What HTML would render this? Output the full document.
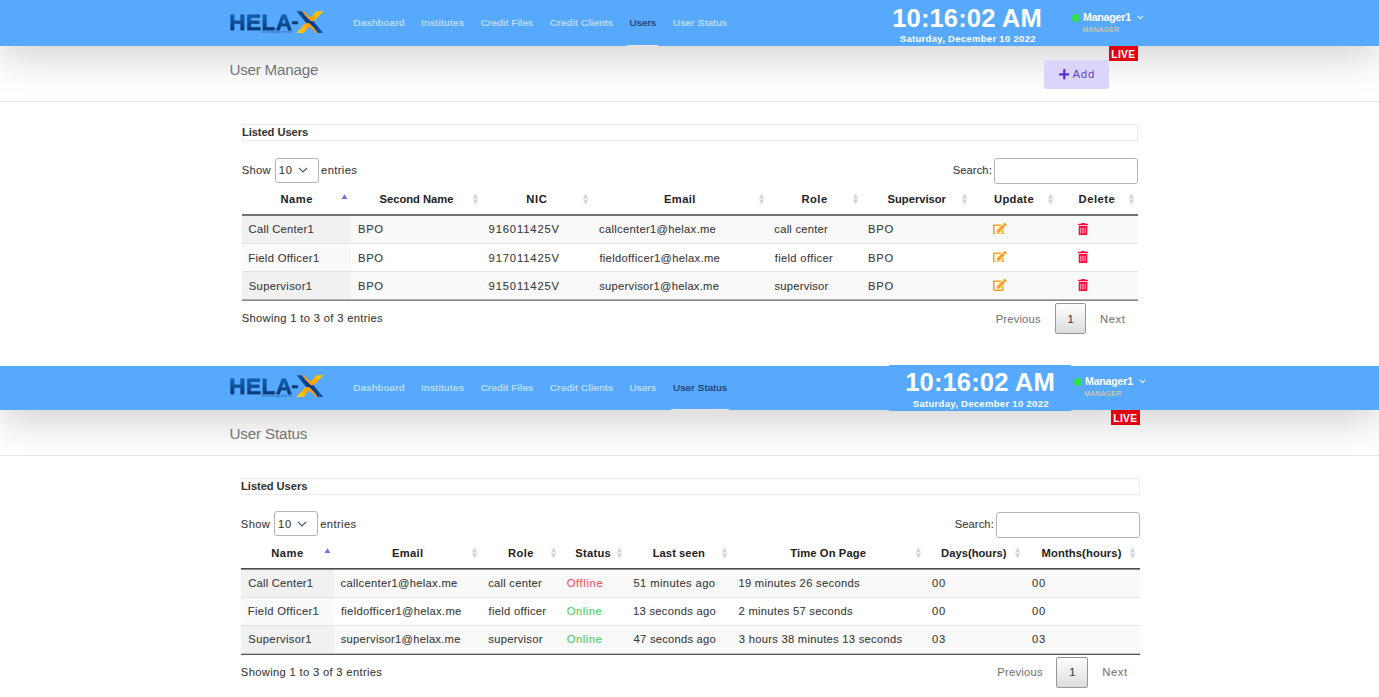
<!DOCTYPE html><html><head><meta charset="utf-8"><title>HELA-X Users</title><style>html,body{margin:0;padding:0;background:#fff}body{width:1379px;height:697px;position:relative;overflow:hidden;font-family:"Liberation Sans", sans-serif}body>div,body>span,body>svg{position:absolute;display:block}span{white-space:nowrap;line-height:1}</style></head><body>
<div style="left:0;top:46px;width:1379px;height:55px;overflow:hidden;background:#fff;border-bottom:1px solid #e6e6e6;box-sizing:content-box"><div style="position:absolute;left:0;right:0;top:-46px;height:46px;box-shadow:0 12px 38px rgba(0,0,0,.18)"></div></div>
<div style="left:0px;top:0px;width:1379px;height:46px;background:#56a9fd"></div>
<svg style="left:296.0px;top:11.0px" width="28" height="22.4" viewBox="0 0 28 22.4"><defs><linearGradient id="lg_o1" gradientUnits="userSpaceOnUse" x1="14" y1="10" x2="27" y2="0"><stop offset="0" stop-color="#ff9800"/><stop offset="1" stop-color="#ffd200"/></linearGradient><linearGradient id="lg_b1" gradientUnits="userSpaceOnUse" x1="0" y1="0" x2="27" y2="22"><stop offset="0" stop-color="#0c56a8"/><stop offset=".5" stop-color="#083878"/><stop offset="1" stop-color="#0c56a8"/></linearGradient></defs><path d="M0.53,0.28 L6.06,0.28 Q10,6 14.2,9.6 Q15.6,10.6 17.2,9.9 L27.2,21.9 L21.62,21.9 Q17.7,16.2 13.5,12.6 Q12.1,11.6 10.5,12.3 Z" fill="url(#lg_b1)"/><path d="M6.06,0.28 L7.8,0.28 Q11,4.5 14.6,6.56 L20.1,0.28 L27.4,0.28 L19.1,9.08 Q16.6,11.2 14.2,9.6 Q10,6 6.06,0.28 Z" fill="url(#lg_o1)"/><path d="M6.06,0.28 L7.8,0.28 Q11,4.5 14.6,6.56 L20.1,0.28 L27.4,0.28 L19.1,9.08 Q16.6,11.2 14.2,9.6 Q10,6 6.06,0.28 Z" fill="url(#lg_o1)" transform="rotate(180 13.84 11.09)"/></svg>
<div style="left:627.1px;top:44.5px;width:31.100000000000023px;height:1.5px;background:#e4e8ee"></div>
<div style="left:1072px;top:13.9px;width:7.8px;height:7.8px;background:#33df4c;border-radius:50%"></div>
<svg style="left:1136.5px;top:15px" width="7" height="5" viewBox="0 0 7 5"><polyline points="0.8,0.900 3.5,3.600 6.2,0.900" fill="none" stroke="#e8f2ff" stroke-width="1.1"/></svg>
<div style="left:1108.8px;top:46.4px;width:29.2px;height:14.5px;background:#e3000f"></div>
<div style="left:1044px;top:60.3px;width:64.6px;height:28.6px;background:#dcd5fb;border-radius:3px"></div>
<svg style="left:1058.8px;top:69.2px" width="10.6" height="10.6" viewBox="0 32 448 448"><path fill="#5b2dc9" d="M416 208H272V64c0-17.670-14.330-32-32-32h-32c-17.670 0-32 14.330-32 32v144H32c-17.670 0-32 14.330-32 32v32c0 17.670 14.330 32 32 32h144v144c0 17.670 14.330 32 32 32h32c17.670 0 32-14.330 32-32V304h144c17.670 0 32-14.330 32-32v-32c0-17.670-14.330-32-32-32z"/></svg>
<div style="left:242px;top:124.3px;width:894px;height:14.5px;border:1px solid #ececec"></div>
<div style="left:275px;top:158px;width:43.6px;height:25px;border:1px solid #b4b4b4;border-radius:3px;box-sizing:border-box;background:#fff"></div>
<svg style="left:298px;top:167.3px" width="10" height="6" viewBox="0 0 10 6"><polyline points="1,1 5,5 9,1" fill="none" stroke="#555" stroke-width="1.1"/></svg>
<div style="left:993.6px;top:158.3px;width:144.4px;height:25.3px;border:1px solid #b4b4b4;border-radius:3px;box-sizing:border-box;background:#fff"></div>
<div style="left:242px;top:214px;width:896px;height:1px;background:#6e6e6e"></div>
<div style="left:242px;top:215px;width:896px;height:28px;background:#f9f9f9;border-top:1px solid #e2e2e2;box-sizing:border-box"></div>
<div style="left:242px;top:215px;width:109.39999999999998px;height:28px;background:#f1f1f1"></div>
<div style="left:242px;top:243px;width:896px;height:28px;background:#ffffff;border-top:1px solid #e2e2e2;box-sizing:border-box"></div>
<div style="left:242px;top:244px;width:109.39999999999998px;height:27px;background:#fafafa"></div>
<div style="left:242px;top:271px;width:896px;height:28px;background:#f9f9f9;border-top:1px solid #e2e2e2;box-sizing:border-box"></div>
<div style="left:242px;top:272px;width:109.39999999999998px;height:27px;background:#f1f1f1"></div>
<div style="left:242px;top:215px;width:896px;height:1px;background:#747474"></div>
<div style="left:242px;top:299px;width:896px;height:1px;background:#b0b0b0"></div>
<div style="left:242px;top:300px;width:896px;height:1px;background:#858585"></div>
<svg style="left:341.4px;top:194.0px" width="7" height="6" viewBox="0 0 7 6"><polygon points="3.5,0.3 6.4,5 0.6,5" fill="#6d72dc"/></svg>
<svg style="left:471.7px;top:193.3px" width="7" height="12" viewBox="0 0 7 12"><polygon points="3.5,0.2 6.2,5.4 0.8,5.4" fill="#d6d6d6"/><polygon points="3.5,11.8 6.2,6.600 0.8,6.600" fill="#d6d6d6"/></svg>
<svg style="left:582.0999999999999px;top:193.3px" width="7" height="12" viewBox="0 0 7 12"><polygon points="3.5,0.2 6.2,5.4 0.8,5.4" fill="#d6d6d6"/><polygon points="3.5,11.8 6.2,6.600 0.8,6.600" fill="#d6d6d6"/></svg>
<svg style="left:757.5px;top:193.3px" width="7" height="12" viewBox="0 0 7 12"><polygon points="3.5,0.2 6.2,5.4 0.8,5.4" fill="#d6d6d6"/><polygon points="3.5,11.8 6.2,6.600 0.8,6.600" fill="#d6d6d6"/></svg>
<svg style="left:852.0999999999999px;top:193.3px" width="7" height="12" viewBox="0 0 7 12"><polygon points="3.5,0.2 6.2,5.4 0.8,5.4" fill="#d6d6d6"/><polygon points="3.5,11.8 6.2,6.600 0.8,6.600" fill="#d6d6d6"/></svg>
<svg style="left:961.4px;top:193.3px" width="7" height="12" viewBox="0 0 7 12"><polygon points="3.5,0.2 6.2,5.4 0.8,5.4" fill="#d6d6d6"/><polygon points="3.5,11.8 6.2,6.600 0.8,6.600" fill="#d6d6d6"/></svg>
<svg style="left:1047.0px;top:193.3px" width="7" height="12" viewBox="0 0 7 12"><polygon points="3.5,0.2 6.2,5.4 0.8,5.4" fill="#d6d6d6"/><polygon points="3.5,11.8 6.2,6.600 0.8,6.600" fill="#d6d6d6"/></svg>
<svg style="left:1127.7px;top:193.3px" width="7" height="12" viewBox="0 0 7 12"><polygon points="3.5,0.2 6.2,5.4 0.8,5.4" fill="#d6d6d6"/><polygon points="3.5,11.8 6.2,6.600 0.8,6.600" fill="#d6d6d6"/></svg>
<svg style="left:993px;top:222.5px" width="13.7" height="11.9" viewBox="0 0 576 512" preserveAspectRatio="none"><path fill="#ff9f1a" d="M402.6 83.200l90.200 90.200c3.800 3.800 3.800 10 0 13.800L274.400 405.600l-92.800 10.300c-12.400 1.400-22.900-9.100-21.500-21.500l10.300-92.800L388.800 83.200c3.800-3.800 10-3.800 13.800 0zm162-22.900l-48.800-48.800c-15.200-15.200-39.900-15.200-55.200 0l-35.400 35.400c-3.800 3.800-3.800 10 0 13.800l90.200 90.200c3.800 3.800 10 3.800 13.800 0l35.400-35.400c15.200-15.300 15.200-40 0-55.200zM384 346.200V448H64V128h229.800c3.200 0 6.200-1.300 8.500-3.500l40-40c7.600-7.600 2.200-20.500-8.500-20.500H48C21.500 64 0 85.500 0 112v352c0 26.500 21.500 48 48 48h352c26.500 0 48-21.500 48-48V306.200c0-10.700-12.900-16-20.500-8.500l-40 40c-2.200 2.300-3.500 5.300-3.500 8.500z"/></svg>
<svg style="left:1078.3px;top:222.5px" width="10" height="12.1" viewBox="0 0 448 512" preserveAspectRatio="none"><path fill="#ff0a3a" d="M32 464a48 48 0 0 0 48 48h288a48 48 0 0 0 48-48V128H32zm272-256a16 16 0 0 1 32 0v224a16 16 0 0 1-32 0zm-96 0a16 16 0 0 1 32 0v224a16 16 0 0 1-32 0zm-96 0a16 16 0 0 1 32 0v224a16 16 0 0 1-32 0zM432 32H312l-9.400-18.700A24 24 0 0 0 281.100 0H166.800a23.720 23.720 0 0 0-21.400 13.300L136 32H16A16 16 0 0 0 0 48v32a16 16 0 0 0 16 16h416a16 16 0 0 0 16-16V48a16 16 0 0 0-16-16z"/></svg>
<svg style="left:993px;top:250.6px" width="13.7" height="11.9" viewBox="0 0 576 512" preserveAspectRatio="none"><path fill="#ff9f1a" d="M402.6 83.200l90.200 90.200c3.800 3.800 3.800 10 0 13.800L274.400 405.600l-92.800 10.300c-12.400 1.400-22.900-9.100-21.500-21.500l10.300-92.800L388.800 83.200c3.800-3.800 10-3.800 13.800 0zm162-22.900l-48.800-48.800c-15.200-15.200-39.900-15.200-55.200 0l-35.400 35.400c-3.800 3.800-3.800 10 0 13.800l90.200 90.200c3.800 3.800 10 3.800 13.800 0l35.400-35.400c15.200-15.300 15.200-40 0-55.200zM384 346.200V448H64V128h229.800c3.200 0 6.200-1.300 8.500-3.500l40-40c7.600-7.600 2.200-20.500-8.500-20.500H48C21.500 64 0 85.500 0 112v352c0 26.500 21.500 48 48 48h352c26.500 0 48-21.500 48-48V306.200c0-10.700-12.900-16-20.500-8.500l-40 40c-2.200 2.300-3.500 5.300-3.500 8.500z"/></svg>
<svg style="left:1078.3px;top:250.6px" width="10" height="12.1" viewBox="0 0 448 512" preserveAspectRatio="none"><path fill="#ff0a3a" d="M32 464a48 48 0 0 0 48 48h288a48 48 0 0 0 48-48V128H32zm272-256a16 16 0 0 1 32 0v224a16 16 0 0 1-32 0zm-96 0a16 16 0 0 1 32 0v224a16 16 0 0 1-32 0zm-96 0a16 16 0 0 1 32 0v224a16 16 0 0 1-32 0zM432 32H312l-9.400-18.700A24 24 0 0 0 281.100 0H166.800a23.720 23.720 0 0 0-21.400 13.300L136 32H16A16 16 0 0 0 0 48v32a16 16 0 0 0 16 16h416a16 16 0 0 0 16-16V48a16 16 0 0 0-16-16z"/></svg>
<svg style="left:993px;top:278.7px" width="13.7" height="11.9" viewBox="0 0 576 512" preserveAspectRatio="none"><path fill="#ff9f1a" d="M402.6 83.200l90.200 90.200c3.800 3.800 3.800 10 0 13.800L274.400 405.600l-92.800 10.300c-12.400 1.400-22.900-9.100-21.500-21.500l10.300-92.800L388.800 83.200c3.800-3.800 10-3.800 13.800 0zm162-22.900l-48.800-48.800c-15.200-15.200-39.900-15.200-55.200 0l-35.400 35.400c-3.800 3.800-3.800 10 0 13.800l90.200 90.200c3.800 3.800 10 3.800 13.800 0l35.400-35.400c15.200-15.300 15.200-40 0-55.200zM384 346.200V448H64V128h229.800c3.200 0 6.200-1.300 8.500-3.500l40-40c7.600-7.600 2.200-20.500-8.500-20.500H48C21.500 64 0 85.500 0 112v352c0 26.500 21.500 48 48 48h352c26.500 0 48-21.500 48-48V306.200c0-10.700-12.900-16-20.500-8.500l-40 40c-2.200 2.300-3.500 5.300-3.500 8.500z"/></svg>
<svg style="left:1078.3px;top:278.7px" width="10" height="12.1" viewBox="0 0 448 512" preserveAspectRatio="none"><path fill="#ff0a3a" d="M32 464a48 48 0 0 0 48 48h288a48 48 0 0 0 48-48V128H32zm272-256a16 16 0 0 1 32 0v224a16 16 0 0 1-32 0zm-96 0a16 16 0 0 1 32 0v224a16 16 0 0 1-32 0zm-96 0a16 16 0 0 1 32 0v224a16 16 0 0 1-32 0zM432 32H312l-9.400-18.700A24 24 0 0 0 281.100 0H166.800a23.720 23.720 0 0 0-21.400 13.300L136 32H16A16 16 0 0 0 0 48v32a16 16 0 0 0 16 16h416a16 16 0 0 0 16-16V48a16 16 0 0 0-16-16z"/></svg>
<div style="left:1055px;top:303px;width:31px;height:31px;border:1px solid #979797;border-radius:2px;box-sizing:border-box;background:linear-gradient(to bottom,#fff 0%,#dcdcdc 100%)"></div>
<div style="left:0;top:410px;width:1379px;height:45px;overflow:hidden;background:#fff;border-bottom:1px solid #e6e6e6;box-sizing:content-box"><div style="position:absolute;left:0;right:0;top:-46px;height:46px;box-shadow:0 12px 38px rgba(0,0,0,.18)"></div></div>
<div style="left:0px;top:366px;width:1379px;height:44px;background:#56a9fd"></div>
<svg style="left:296.0px;top:375.0px" width="28" height="22.4" viewBox="0 0 28 22.4"><defs><linearGradient id="lg_o2" gradientUnits="userSpaceOnUse" x1="14" y1="10" x2="27" y2="0"><stop offset="0" stop-color="#ff9800"/><stop offset="1" stop-color="#ffd200"/></linearGradient><linearGradient id="lg_b2" gradientUnits="userSpaceOnUse" x1="0" y1="0" x2="27" y2="22"><stop offset="0" stop-color="#0c56a8"/><stop offset=".5" stop-color="#083878"/><stop offset="1" stop-color="#0c56a8"/></linearGradient></defs><path d="M0.53,0.28 L6.06,0.28 Q10,6 14.2,9.6 Q15.6,10.6 17.2,9.9 L27.2,21.9 L21.62,21.9 Q17.7,16.2 13.5,12.6 Q12.1,11.6 10.5,12.3 Z" fill="url(#lg_b2)"/><path d="M6.06,0.28 L7.8,0.28 Q11,4.5 14.6,6.56 L20.1,0.28 L27.4,0.28 L19.1,9.08 Q16.6,11.2 14.2,9.6 Q10,6 6.06,0.28 Z" fill="url(#lg_o2)"/><path d="M6.06,0.28 L7.8,0.28 Q11,4.5 14.6,6.56 L20.1,0.28 L27.4,0.28 L19.1,9.08 Q16.6,11.2 14.2,9.6 Q10,6 6.06,0.28 Z" fill="url(#lg_o2)" transform="rotate(180 13.84 11.09)"/></svg>
<div style="left:670.7px;top:408.5px;width:58.5px;height:1.5px;background:#e4e8ee"></div>
<div style="left:1074px;top:377.9px;width:7.8px;height:7.8px;background:#33df4c;border-radius:50%"></div>
<svg style="left:1138.5px;top:379px" width="7" height="5" viewBox="0 0 7 5"><polyline points="0.8,0.900 3.5,3.600 6.2,0.900" fill="none" stroke="#e8f2ff" stroke-width="1.1"/></svg>
<div style="left:1110.8px;top:410.4px;width:29.2px;height:14.5px;background:#e3000f"></div>
<div style="left:889.4px;top:365px;width:182px;height:45.6px;background:#56a9fd"></div>
<div style="left:241.2px;top:478.3px;width:896.8px;height:14.5px;border:1px solid #ececec"></div>
<div style="left:274px;top:511px;width:43.6px;height:25px;border:1px solid #b4b4b4;border-radius:3px;box-sizing:border-box;background:#fff"></div>
<svg style="left:297.2px;top:521.3px" width="10" height="6" viewBox="0 0 10 6"><polyline points="1,1 5,5 9,1" fill="none" stroke="#555" stroke-width="1.1"/></svg>
<div style="left:995.6px;top:512.3px;width:144.4px;height:25.3px;border:1px solid #b4b4b4;border-radius:3px;box-sizing:border-box;background:#fff"></div>
<div style="left:241.2px;top:568px;width:898.8px;height:1px;background:#4e4e4e"></div>
<div style="left:241.2px;top:569px;width:898.8px;height:28px;background:#f9f9f9;border-top:1px solid #e2e2e2;box-sizing:border-box"></div>
<div style="left:241.2px;top:569px;width:92.80000000000001px;height:28px;background:#f1f1f1"></div>
<div style="left:241.2px;top:597px;width:898.8px;height:28px;background:#ffffff;border-top:1px solid #e2e2e2;box-sizing:border-box"></div>
<div style="left:241.2px;top:598px;width:92.80000000000001px;height:27px;background:#fafafa"></div>
<div style="left:241.2px;top:625px;width:898.8px;height:28px;background:#f9f9f9;border-top:1px solid #e2e2e2;box-sizing:border-box"></div>
<div style="left:241.2px;top:626px;width:92.80000000000001px;height:27px;background:#f1f1f1"></div>
<div style="left:241.2px;top:569px;width:898.8px;height:1px;background:#8a8a8a"></div>
<div style="left:241.2px;top:653px;width:898.8px;height:1px;background:#c4c4c4"></div>
<div style="left:241.2px;top:654px;width:898.8px;height:1px;background:#555"></div>
<svg style="left:324.0px;top:548.0px" width="7" height="6" viewBox="0 0 7 6"><polygon points="3.5,0.3 6.4,5 0.6,5" fill="#6d72dc"/></svg>
<svg style="left:471.2px;top:547.3px" width="7" height="12" viewBox="0 0 7 12"><polygon points="3.5,0.2 6.2,5.4 0.8,5.4" fill="#d6d6d6"/><polygon points="3.5,11.8 6.2,6.600 0.8,6.600" fill="#d6d6d6"/></svg>
<svg style="left:549.9px;top:547.3px" width="7" height="12" viewBox="0 0 7 12"><polygon points="3.5,0.2 6.2,5.4 0.8,5.4" fill="#d6d6d6"/><polygon points="3.5,11.8 6.2,6.600 0.8,6.600" fill="#d6d6d6"/></svg>
<svg style="left:616.1999999999999px;top:547.3px" width="7" height="12" viewBox="0 0 7 12"><polygon points="3.5,0.2 6.2,5.4 0.8,5.4" fill="#d6d6d6"/><polygon points="3.5,11.8 6.2,6.600 0.8,6.600" fill="#d6d6d6"/></svg>
<svg style="left:721.0999999999999px;top:547.3px" width="7" height="12" viewBox="0 0 7 12"><polygon points="3.5,0.2 6.2,5.4 0.8,5.4" fill="#d6d6d6"/><polygon points="3.5,11.8 6.2,6.600 0.8,6.600" fill="#d6d6d6"/></svg>
<svg style="left:914.5999999999999px;top:547.3px" width="7" height="12" viewBox="0 0 7 12"><polygon points="3.5,0.2 6.2,5.4 0.8,5.4" fill="#d6d6d6"/><polygon points="3.5,11.8 6.2,6.600 0.8,6.600" fill="#d6d6d6"/></svg>
<svg style="left:1014.1999999999999px;top:547.3px" width="7" height="12" viewBox="0 0 7 12"><polygon points="3.5,0.2 6.2,5.4 0.8,5.4" fill="#d6d6d6"/><polygon points="3.5,11.8 6.2,6.600 0.8,6.600" fill="#d6d6d6"/></svg>
<svg style="left:1129.3999999999999px;top:547.3px" width="7" height="12" viewBox="0 0 7 12"><polygon points="3.5,0.2 6.2,5.4 0.8,5.4" fill="#d6d6d6"/><polygon points="3.5,11.8 6.2,6.600 0.8,6.600" fill="#d6d6d6"/></svg>
<div style="left:1056.4px;top:657px;width:31.5px;height:31px;border:1px solid #979797;border-radius:2px;box-sizing:border-box;background:linear-gradient(to bottom,#fff 0%,#dcdcdc 100%)"></div>
<span style="left:229.45px;top:62.00px;font-size:15.2px;font-weight:400;color:#747474;letter-spacing:-0.228px;">User Manage</span>
<span style="left:229.19px;top:12.00px;font-size:22.6px;font-weight:700;color:#0b3f80;letter-spacing:0.474px;background:linear-gradient(to bottom,#0f5fb0 25%,#0a3470 80%);-webkit-background-clip:text;background-clip:text;color:transparent;-webkit-text-stroke:0.35px #0c4a94;">HELA</span>
<span style="left:291.21px;top:10.00px;font-size:22.0px;font-weight:700;color:#0a3c7c;letter-spacing:0.456px;-webkit-text-stroke:0.3px #0a3c7c;">-</span>
<span style="left:260.95px;top:32.00px;font-size:2.6px;font-weight:400;color:#2a5a9c;letter-spacing:-0.101px;">Your one manager of the face</span>
<span style="left:353.23px;top:18.00px;font-size:9.8px;font-weight:400;color:#c6e1fe;letter-spacing:0.422px;-webkit-text-stroke-width:0.2px;">Dashboard</span>
<span style="left:420.93px;top:18.00px;font-size:9.8px;font-weight:400;color:#c6e1fe;letter-spacing:0.417px;-webkit-text-stroke-width:0.2px;">Institutes</span>
<span style="left:480.74px;top:18.00px;font-size:9.8px;font-weight:400;color:#c6e1fe;letter-spacing:0.246px;-webkit-text-stroke-width:0.2px;">Credit Files</span>
<span style="left:549.94px;top:18.00px;font-size:9.8px;font-weight:400;color:#c6e1fe;letter-spacing:0.319px;-webkit-text-stroke-width:0.2px;">Credit Clients</span>
<span style="left:629.49px;top:18.00px;font-size:9.8px;font-weight:400;color:#1f3968;letter-spacing:0.232px;-webkit-text-stroke-width:0.2px;">Users</span>
<span style="left:673.09px;top:18.00px;font-size:9.8px;font-weight:400;color:#c6e1fe;letter-spacing:0.272px;-webkit-text-stroke-width:0.2px;">User Status</span>
<span style="left:892.20px;top:6.00px;font-size:25.6px;font-weight:700;color:#fff;letter-spacing:0.113px;">10:16:02 AM</span>
<span style="left:899.75px;top:34.00px;font-size:9.5px;font-weight:700;color:#fff;letter-spacing:0.305px;">Saturday, December 10 2022</span>
<span style="left:1083.04px;top:12.00px;font-size:10.6px;font-weight:700;color:#fff;letter-spacing:-0.208px;">Manager1</span>
<span style="left:1082.47px;top:27.00px;font-size:6.8px;font-weight:400;color:#f0d27c;letter-spacing:0.398px;">MANAGER</span>
<span style="left:1111.36px;top:50.00px;font-size:10.2px;font-weight:700;color:#fff;letter-spacing:0.345px;">LIVE</span>
<span style="left:1072.50px;top:69.00px;font-size:11.4px;font-weight:400;color:#6640d0;letter-spacing:0.728px;">Add</span>
<span style="left:241.90px;top:127.00px;font-size:11.2px;font-weight:700;color:#303030;letter-spacing:-0.079px;">Listed Users</span>
<span style="left:241.65px;top:165.00px;font-size:11.2px;font-weight:400;color:#3a3a3a;letter-spacing:0.332px;-webkit-text-stroke-width:0.1px;">Show</span>
<span style="left:278.76px;top:165.00px;font-size:11.2px;font-weight:400;color:#3a3a3a;letter-spacing:0.900px;-webkit-text-stroke-width:0.1px;">10</span>
<span style="left:321.05px;top:165.00px;font-size:11.2px;font-weight:400;color:#3a3a3a;letter-spacing:0.381px;-webkit-text-stroke-width:0.1px;">entries</span>
<span style="left:952.65px;top:165.00px;font-size:11.2px;font-weight:400;color:#3a3a3a;letter-spacing:0.094px;-webkit-text-stroke-width:0.1px;">Search:</span>
<span style="left:280.40px;top:194.00px;font-size:11.2px;font-weight:700;color:#222;letter-spacing:0.525px;">Name</span>
<span style="left:379.52px;top:194.00px;font-size:11.2px;font-weight:700;color:#222;letter-spacing:-0.011px;">Second Name</span>
<span style="left:526.30px;top:194.00px;font-size:11.2px;font-weight:700;color:#222;letter-spacing:0.613px;">NIC</span>
<span style="left:664.00px;top:194.00px;font-size:11.2px;font-weight:700;color:#222;letter-spacing:0.370px;">Email</span>
<span style="left:801.50px;top:194.00px;font-size:11.2px;font-weight:700;color:#222;letter-spacing:0.470px;">Role</span>
<span style="left:887.62px;top:194.00px;font-size:11.2px;font-weight:700;color:#222;letter-spacing:-0.020px;">Supervisor</span>
<span style="left:993.98px;top:194.00px;font-size:11.2px;font-weight:700;color:#222;letter-spacing:0.349px;">Update</span>
<span style="left:1078.50px;top:194.00px;font-size:11.2px;font-weight:700;color:#222;letter-spacing:0.552px;">Delete</span>
<span style="left:248.57px;top:224.00px;font-size:11.2px;font-weight:400;color:#3a3a3a;letter-spacing:0.266px;-webkit-text-stroke-width:0.1px;">Call Center1</span>
<span style="left:358.12px;top:224.00px;font-size:11.2px;font-weight:400;color:#3a3a3a;letter-spacing:0.605px;-webkit-text-stroke-width:0.1px;">BPO</span>
<span style="left:488.58px;top:224.00px;font-size:11.2px;font-weight:400;color:#3a3a3a;letter-spacing:0.875px;-webkit-text-stroke-width:0.1px;">916011425V</span>
<span style="left:599.05px;top:224.00px;font-size:11.2px;font-weight:400;color:#3a3a3a;letter-spacing:0.307px;-webkit-text-stroke-width:0.1px;">callcenter1@helax.me</span>
<span style="left:774.35px;top:224.00px;font-size:11.2px;font-weight:400;color:#3a3a3a;letter-spacing:0.236px;-webkit-text-stroke-width:0.1px;">call center</span>
<span style="left:868.02px;top:224.00px;font-size:11.2px;font-weight:400;color:#3a3a3a;letter-spacing:0.755px;-webkit-text-stroke-width:0.1px;">BPO</span>
<span style="left:248.22px;top:253.00px;font-size:11.2px;font-weight:400;color:#3a3a3a;letter-spacing:0.356px;-webkit-text-stroke-width:0.1px;">Field Officer1</span>
<span style="left:358.12px;top:253.00px;font-size:11.2px;font-weight:400;color:#3a3a3a;letter-spacing:0.605px;-webkit-text-stroke-width:0.1px;">BPO</span>
<span style="left:488.58px;top:253.00px;font-size:11.2px;font-weight:400;color:#3a3a3a;letter-spacing:0.875px;-webkit-text-stroke-width:0.1px;">917011425V</span>
<span style="left:599.40px;top:253.00px;font-size:11.2px;font-weight:400;color:#3a3a3a;letter-spacing:0.317px;-webkit-text-stroke-width:0.1px;">fieldofficer1@helax.me</span>
<span style="left:774.70px;top:253.00px;font-size:11.2px;font-weight:400;color:#3a3a3a;letter-spacing:0.342px;-webkit-text-stroke-width:0.1px;">field officer</span>
<span style="left:868.02px;top:253.00px;font-size:11.2px;font-weight:400;color:#3a3a3a;letter-spacing:0.755px;-webkit-text-stroke-width:0.1px;">BPO</span>
<span style="left:248.75px;top:281.00px;font-size:11.2px;font-weight:400;color:#3a3a3a;letter-spacing:0.354px;-webkit-text-stroke-width:0.1px;">Supervisor1</span>
<span style="left:358.12px;top:281.00px;font-size:11.2px;font-weight:400;color:#3a3a3a;letter-spacing:0.605px;-webkit-text-stroke-width:0.1px;">BPO</span>
<span style="left:488.58px;top:281.00px;font-size:11.2px;font-weight:400;color:#3a3a3a;letter-spacing:0.875px;-webkit-text-stroke-width:0.1px;">915011425V</span>
<span style="left:599.23px;top:281.00px;font-size:11.2px;font-weight:400;color:#3a3a3a;letter-spacing:0.270px;-webkit-text-stroke-width:0.1px;">supervisor1@helax.me</span>
<span style="left:774.53px;top:281.00px;font-size:11.2px;font-weight:400;color:#3a3a3a;letter-spacing:0.241px;-webkit-text-stroke-width:0.1px;">supervisor</span>
<span style="left:868.02px;top:281.00px;font-size:11.2px;font-weight:400;color:#3a3a3a;letter-spacing:0.755px;-webkit-text-stroke-width:0.1px;">BPO</span>
<span style="left:241.65px;top:313.00px;font-size:11.2px;font-weight:400;color:#3a3a3a;letter-spacing:0.330px;-webkit-text-stroke-width:0.1px;">Showing 1 to 3 of 3 entries</span>
<span style="left:995.73px;top:314.00px;font-size:11.2px;font-weight:400;color:#777;letter-spacing:0.179px;-webkit-text-stroke-width:0.1px;">Previous</span>
<span style="left:1067.50px;top:314.00px;font-size:11.2px;font-weight:400;color:#3a3a3a;-webkit-text-stroke-width:0.1px;">1</span>
<span style="left:1100.12px;top:314.00px;font-size:11.2px;font-weight:400;color:#777;letter-spacing:0.603px;-webkit-text-stroke-width:0.1px;">Next</span>
<span style="left:229.45px;top:426.00px;font-size:15.2px;font-weight:400;color:#747474;letter-spacing:-0.138px;">User Status</span>
<span style="left:229.19px;top:376.00px;font-size:22.6px;font-weight:700;color:#0b3f80;letter-spacing:0.474px;background:linear-gradient(to bottom,#0f5fb0 25%,#0a3470 80%);-webkit-background-clip:text;background-clip:text;color:transparent;-webkit-text-stroke:0.35px #0c4a94;">HELA</span>
<span style="left:291.21px;top:374.00px;font-size:22.0px;font-weight:700;color:#0a3c7c;letter-spacing:0.456px;-webkit-text-stroke:0.3px #0a3c7c;">-</span>
<span style="left:260.95px;top:396.00px;font-size:2.6px;font-weight:400;color:#2a5a9c;letter-spacing:-0.101px;">Your one manager of the face</span>
<span style="left:353.23px;top:383.00px;font-size:9.8px;font-weight:400;color:#c6e1fe;letter-spacing:0.422px;-webkit-text-stroke-width:0.2px;">Dashboard</span>
<span style="left:420.93px;top:383.00px;font-size:9.8px;font-weight:400;color:#c6e1fe;letter-spacing:0.417px;-webkit-text-stroke-width:0.2px;">Institutes</span>
<span style="left:480.74px;top:383.00px;font-size:9.8px;font-weight:400;color:#c6e1fe;letter-spacing:0.246px;-webkit-text-stroke-width:0.2px;">Credit Files</span>
<span style="left:549.94px;top:383.00px;font-size:9.8px;font-weight:400;color:#c6e1fe;letter-spacing:0.319px;-webkit-text-stroke-width:0.2px;">Credit Clients</span>
<span style="left:629.49px;top:383.00px;font-size:9.8px;font-weight:400;color:#c6e1fe;letter-spacing:0.232px;-webkit-text-stroke-width:0.2px;">Users</span>
<span style="left:673.09px;top:383.00px;font-size:9.8px;font-weight:400;color:#1f3968;letter-spacing:0.272px;-webkit-text-stroke-width:0.2px;">User Status</span>
<span style="left:905.20px;top:370.00px;font-size:25.6px;font-weight:700;color:#fff;letter-spacing:0.113px;">10:16:02 AM</span>
<span style="left:912.75px;top:399.00px;font-size:9.5px;font-weight:700;color:#fff;letter-spacing:0.305px;">Saturday, December 10 2022</span>
<span style="left:1085.04px;top:376.00px;font-size:10.6px;font-weight:700;color:#fff;letter-spacing:-0.208px;">Manager1</span>
<span style="left:1084.47px;top:391.00px;font-size:6.8px;font-weight:400;color:#f0d27c;letter-spacing:0.398px;">MANAGER</span>
<span style="left:1113.36px;top:414.00px;font-size:10.2px;font-weight:700;color:#fff;letter-spacing:0.345px;">LIVE</span>
<span style="left:241.10px;top:481.00px;font-size:11.2px;font-weight:700;color:#303030;letter-spacing:-0.079px;">Listed Users</span>
<span style="left:240.85px;top:519.00px;font-size:11.2px;font-weight:400;color:#3a3a3a;letter-spacing:0.332px;-webkit-text-stroke-width:0.1px;">Show</span>
<span style="left:277.96px;top:519.00px;font-size:11.2px;font-weight:400;color:#3a3a3a;letter-spacing:0.900px;-webkit-text-stroke-width:0.1px;">10</span>
<span style="left:320.25px;top:519.00px;font-size:11.2px;font-weight:400;color:#3a3a3a;letter-spacing:0.381px;-webkit-text-stroke-width:0.1px;">entries</span>
<span style="left:954.65px;top:519.00px;font-size:11.2px;font-weight:400;color:#3a3a3a;letter-spacing:0.094px;-webkit-text-stroke-width:0.1px;">Search:</span>
<span style="left:271.30px;top:548.00px;font-size:11.2px;font-weight:700;color:#222;letter-spacing:0.458px;">Name</span>
<span style="left:392.00px;top:548.00px;font-size:11.2px;font-weight:700;color:#222;letter-spacing:0.320px;">Email</span>
<span style="left:508.00px;top:548.00px;font-size:11.2px;font-weight:700;color:#222;letter-spacing:0.370px;">Role</span>
<span style="left:575.33px;top:548.00px;font-size:11.2px;font-weight:700;color:#222;letter-spacing:0.240px;">Status</span>
<span style="left:652.70px;top:548.00px;font-size:11.2px;font-weight:700;color:#222;letter-spacing:0.059px;">Last seen</span>
<span style="left:790.20px;top:548.00px;font-size:11.2px;font-weight:700;color:#222;letter-spacing:0.127px;">Time On Page</span>
<span style="left:941.10px;top:548.00px;font-size:11.2px;font-weight:700;color:#222;letter-spacing:0.016px;">Days(hours)</span>
<span style="left:1041.60px;top:548.00px;font-size:11.2px;font-weight:700;color:#222;letter-spacing:0.127px;">Months(hours)</span>
<span style="left:248.17px;top:578.00px;font-size:11.2px;font-weight:400;color:#3a3a3a;letter-spacing:0.248px;-webkit-text-stroke-width:0.1px;">Call Center1</span>
<span style="left:340.55px;top:578.00px;font-size:11.2px;font-weight:400;color:#3a3a3a;letter-spacing:0.307px;-webkit-text-stroke-width:0.1px;">callcenter1@helax.me</span>
<span style="left:488.15px;top:578.00px;font-size:11.2px;font-weight:400;color:#3a3a3a;letter-spacing:0.266px;-webkit-text-stroke-width:0.1px;">call center</span>
<span style="left:566.68px;top:578.00px;font-size:11.2px;font-weight:400;color:#ff4d5e;letter-spacing:0.652px;-webkit-text-stroke-width:0.1px;">Offline</span>
<span style="left:633.45px;top:578.00px;font-size:11.2px;font-weight:400;color:#3a3a3a;letter-spacing:0.394px;-webkit-text-stroke-width:0.1px;">51 minutes ago</span>
<span style="left:738.40px;top:578.00px;font-size:11.2px;font-weight:400;color:#3a3a3a;letter-spacing:0.308px;-webkit-text-stroke-width:0.1px;">19 minutes 26 seconds</span>
<span style="left:931.89px;top:578.00px;font-size:11.2px;font-weight:400;color:#3a3a3a;letter-spacing:0.900px;-webkit-text-stroke-width:0.1px;">00</span>
<span style="left:1031.89px;top:578.00px;font-size:11.2px;font-weight:400;color:#3a3a3a;letter-spacing:0.900px;-webkit-text-stroke-width:0.1px;">00</span>
<span style="left:247.82px;top:606.00px;font-size:11.2px;font-weight:400;color:#3a3a3a;letter-spacing:0.356px;-webkit-text-stroke-width:0.1px;">Field Officer1</span>
<span style="left:340.90px;top:606.00px;font-size:11.2px;font-weight:400;color:#3a3a3a;letter-spacing:0.317px;-webkit-text-stroke-width:0.1px;">fieldofficer1@helax.me</span>
<span style="left:488.50px;top:606.00px;font-size:11.2px;font-weight:400;color:#3a3a3a;letter-spacing:0.308px;-webkit-text-stroke-width:0.1px;">field officer</span>
<span style="left:566.68px;top:606.00px;font-size:11.2px;font-weight:400;color:#4bd061;letter-spacing:0.561px;-webkit-text-stroke-width:0.1px;">Online</span>
<span style="left:633.10px;top:606.00px;font-size:11.2px;font-weight:400;color:#3a3a3a;letter-spacing:0.282px;-webkit-text-stroke-width:0.1px;">13 seconds ago</span>
<span style="left:738.58px;top:606.00px;font-size:11.2px;font-weight:400;color:#3a3a3a;letter-spacing:0.275px;-webkit-text-stroke-width:0.1px;">2 minutes 57 seconds</span>
<span style="left:931.89px;top:606.00px;font-size:11.2px;font-weight:400;color:#3a3a3a;letter-spacing:0.900px;-webkit-text-stroke-width:0.1px;">00</span>
<span style="left:1031.89px;top:606.00px;font-size:11.2px;font-weight:400;color:#3a3a3a;letter-spacing:0.900px;-webkit-text-stroke-width:0.1px;">00</span>
<span style="left:248.35px;top:634.00px;font-size:11.2px;font-weight:400;color:#3a3a3a;letter-spacing:0.354px;-webkit-text-stroke-width:0.1px;">Supervisor1</span>
<span style="left:340.72px;top:634.00px;font-size:11.2px;font-weight:400;color:#3a3a3a;letter-spacing:0.270px;-webkit-text-stroke-width:0.1px;">supervisor1@helax.me</span>
<span style="left:488.32px;top:634.00px;font-size:11.2px;font-weight:400;color:#3a3a3a;letter-spacing:0.274px;-webkit-text-stroke-width:0.1px;">supervisor</span>
<span style="left:566.68px;top:634.00px;font-size:11.2px;font-weight:400;color:#4bd061;letter-spacing:0.561px;-webkit-text-stroke-width:0.1px;">Online</span>
<span style="left:633.62px;top:634.00px;font-size:11.2px;font-weight:400;color:#3a3a3a;letter-spacing:0.242px;-webkit-text-stroke-width:0.1px;">47 seconds ago</span>
<span style="left:738.75px;top:634.00px;font-size:11.2px;font-weight:400;color:#3a3a3a;letter-spacing:0.280px;-webkit-text-stroke-width:0.1px;">3 hours 38 minutes 13 seconds</span>
<span style="left:931.97px;top:634.00px;font-size:11.2px;font-weight:400;color:#3a3a3a;letter-spacing:0.900px;-webkit-text-stroke-width:0.1px;">03</span>
<span style="left:1031.97px;top:634.00px;font-size:11.2px;font-weight:400;color:#3a3a3a;letter-spacing:0.900px;-webkit-text-stroke-width:0.1px;">03</span>
<span style="left:240.85px;top:667.00px;font-size:11.2px;font-weight:400;color:#3a3a3a;letter-spacing:0.330px;-webkit-text-stroke-width:0.1px;">Showing 1 to 3 of 3 entries</span>
<span style="left:997.33px;top:667.00px;font-size:11.2px;font-weight:400;color:#777;letter-spacing:0.236px;-webkit-text-stroke-width:0.1px;">Previous</span>
<span style="left:1069.15px;top:667.00px;font-size:11.2px;font-weight:400;color:#3a3a3a;-webkit-text-stroke-width:0.1px;">1</span>
<span style="left:1102.33px;top:667.00px;font-size:11.2px;font-weight:400;color:#777;letter-spacing:0.603px;-webkit-text-stroke-width:0.1px;">Next</span>
</body></html>
